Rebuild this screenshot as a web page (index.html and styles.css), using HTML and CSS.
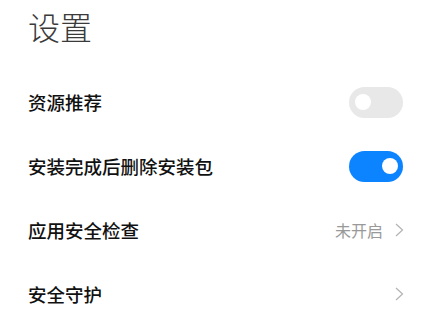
FILE: index.html
```html
<!DOCTYPE html>
<html lang="zh-CN">
<head>
<meta charset="utf-8">
<title>设置</title>
<link rel="stylesheet" href="styles.css">
</head>
<body>
<div class="page">
  <header class="header"><h1 class="title">设置</h1></header>
  <ul class="list">
    <li class="row">
      <span class="label">资源推荐</span>
      <span class="switch"><span class="knob"></span></span>
    </li>
    <li class="row">
      <span class="label">安装完成后删除安装包</span>
      <span class="switch on"><span class="knob"></span></span>
    </li>
    <li class="row">
      <span class="label">应用安全检查</span>
      <span class="trail"><span class="value">未开启</span>
        <svg class="chev" width="9" height="14" viewBox="0 0 9 14"><path d="M1 1 L7.5 7 L1 13" fill="none" stroke="#b3b3b3" stroke-width="1.2"/></svg>
      </span>
    </li>
    <li class="row">
      <span class="label">安全守护</span>
      <span class="trail">
        <svg class="chev" width="9" height="14" viewBox="0 0 9 14"><path d="M1 1 L7.5 7 L1 13" fill="none" stroke="#b3b3b3" stroke-width="1.2"/></svg>
      </span>
    </li>
  </ul>
</div>
</body>
</html>
```
FILE: styles.css
```css
html, body { margin: 0; padding: 0; background: #fff; }
body { font-family: "Noto Sans CJK SC", "Noto Sans", sans-serif; }
.page { padding: 0 28px 0 28px; }
.header { height: 70px; }
.title { margin: 0; font-size: 32px; line-height: 52px; font-weight: 300; color: #3a3a3a; letter-spacing: 0; }
.list { list-style: none; margin: 0; padding: 0; }
.row { height: 64px; display: flex; align-items: center; justify-content: space-between; }
.label { font-size: 18.5px; font-weight: 500; color: #111; }
.switch { width: 54px; height: 31px; border-radius: 15.5px; background: #e8e8e8; display: flex; align-items: center; padding: 0 6px; box-sizing: border-box; }
.switch.on { background: #0d84ff; justify-content: flex-end; padding: 0 5px; }
.knob { width: 16px; height: 16px; border-radius: 50%; background: #fff; }
.trail { display: flex; align-items: center; gap: 12px; }
.value { font-size: 16px; color: #999; }
.chev { display: block; margin-right: -1px; }
```
